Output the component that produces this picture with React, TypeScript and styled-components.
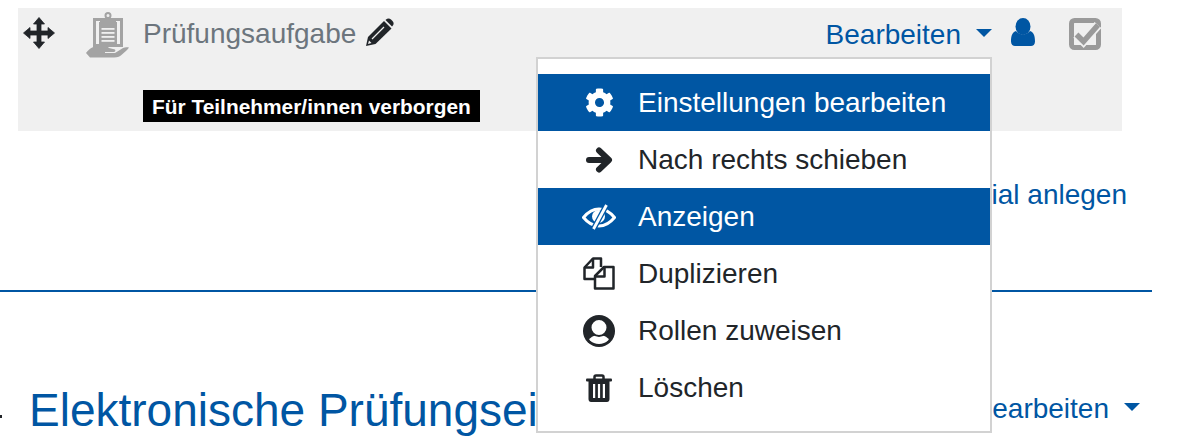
import React from "react";
import styled, { createGlobalStyle } from "styled-components";
import { FaCog } from "react-icons/fa";

const Global = createGlobalStyle`
  html, body { margin: 0; padding: 0; background: #fff; }
  body { font-family: "Liberation Sans", Arial, sans-serif; color: #212529; }
`;

const Page = styled.div`
  width: 1182px;
  height: 444px;
  overflow: hidden;
  padding-top: 8px;
  box-sizing: border-box;
`;

const Bar = styled.div`
  position: relative;
  width: 1104px;
  height: 123px;
  margin-left: 18px;
  background: #f0f0f0;
`;

const TopRow = styled.div`
  display: flex;
  align-items: flex-start;
  height: 60px;
`;

const MoveHandle = styled.svg`
  width: 32px;
  height: 32px;
  margin: 9px 0 0 5px;
  flex: none;
`;

const ActivityIcon = styled.svg`
  width: 44px;
  height: 50px;
  margin: 4px 0 0 30px;
  flex: none;
`;

const Title = styled.span`
  margin: 10px 0 0 14px;
  font-size: 28px;
  line-height: 32px;
  color: #6c757d;
`;

const Pencil = styled.svg`
  width: 28px;
  height: 28px;
  margin: 10px 0 0 10px;
  flex: none;
`;

const Actions = styled.div`
  display: flex;
  align-items: flex-start;
  margin-left: auto;
  padding-right: 20px;
`;

const EditLabel = styled.span`
  font-size: 28px;
  line-height: 32px;
  color: #0056a3;
`;

const EditToggle = styled.div`
  display: flex;
  align-items: flex-start;
`;

const TopEdit = styled(EditToggle)`
  margin-top: 11px;
`;

const Caret = styled.i`
  flex: none;
  width: 0;
  height: 0;
  margin: 10px 0 0 15px;
  border-left: 8px solid transparent;
  border-right: 8px solid transparent;
  border-top: 8px solid #0056a3;
`;

const UserMark = styled.svg`
  width: 24px;
  height: 28px;
  margin: 10px 0 0 19px;
  flex: none;
`;

const CheckBox = styled.svg`
  width: 34px;
  height: 34px;
  margin: 9px 0 0 33px;
  flex: none;
`;

const HiddenBadge = styled.span`
  display: inline-block;
  margin: 22px 0 0 125px;
  padding: 0 9px;
  height: 32px;
  line-height: 34px;
  background: #000;
  color: #fff;
  font-weight: 700;
  font-size: 20.9px;
`;

const Menu = styled.div`
  position: absolute;
  z-index: 5;
  left: 518px;
  top: 49px;
  width: 456px;
  height: 376px;
  box-sizing: border-box;
  padding-top: 15px;
  background: #fff;
  border: 2px solid #d2d2d2;
`;

const MenuRow = styled.div<{ $active?: boolean }>`
  display: flex;
  align-items: center;
  height: 57px;
  background: ${(p) => (p.$active ? "#0056a3" : "transparent")};
  color: ${(p) => (p.$active ? "#fff" : "#212529")};
  font-size: 28px;
`;

const MenuIcon = styled.span`
  flex: none;
  display: flex;
  justify-content: center;
  width: 34px;
  margin: 0 22px 0 44px;
  font-size: 29px;
`;

const LinkRow = styled.div`
  width: 1127px;
  margin-top: 48px;
  text-align: right;
  font-size: 28px;
  line-height: 32px;
  color: #0056a3;
`;

const Rule = styled.hr`
  width: 1152px;
  height: 2px;
  margin: 79px 0 0;
  border: 0;
  background: #0056a3;
`;

const SectionRow = styled.div`
  display: flex;
  align-items: flex-start;
  width: 1140px;
  margin-top: 91px;
  position: relative;
`;

const SectionTitle = styled.h3`
  width: 507px;
  overflow: hidden;
  margin: 0 0 0 29px;
  font-size: 46px;
  line-height: 54px;
  font-weight: 400;
  color: #0056a3;
  white-space: nowrap;
`;

const SectionEdit = styled(EditToggle)`
  margin: 10px 0 0 auto;
`;

const Dot = styled.i`
  position: absolute;
  left: 0;
  top: 32px;
  width: 2px;
  height: 3px;
  background: #212529;
`;

export default function App() {
  return (
    <Page>
      <Global />
      <Bar>
        <TopRow>
          <MoveHandle viewBox="0 0 32 32">
            <path
              d="M16 .5l5.500 6.500H18v7h7v-3.500l6.500 5.500-6.500 5.500V18h-7v7h3.500L16 31.500 10.500 25H14v-7H7v3.500L.5 16 7 10.500V14h7V7h-3.500z"
              fill="#212529"
              stroke="#212529"
              strokeWidth="0.8"
              strokeLinejoin="round"
            />
          </MoveHandle>
          <ActivityIcon viewBox="0 0 44 50">
            <rect x="9.500" y="7.500" width="27" height="26" fill="none" stroke="#a3a3a3" strokeWidth="3" />
            <rect x="14" y="10" width="18" height="24" fill="#a3a3a3" />
            <rect x="15" y="6" width="16" height="7" fill="#a3a3a3" />
            <circle cx="23" cy="3.500" r="2.500" fill="none" stroke="#a3a3a3" strokeWidth="2" />
            <g fill="#f0f0f0">
              <rect x="16.500" y="16" width="13" height="1.800" />
              <rect x="16.500" y="20" width="13" height="1.800" />
              <rect x="16.500" y="24" width="13" height="1.800" />
              <rect x="16.500" y="28" width="13" height="1.800" />
            </g>
            <path
              d="M1 41c3-4 7-7 12-7h7c2 0 3 1 4 2l4 1c2 0 3 1 2 2.500l-1 .5h-9v1h10l8-5c2-1 4-1 6-.5-1 2-4 4-7 7-2 2-4 3-8 3H5z"
              fill="#a3a3a3"
            />
          </ActivityIcon>
          <Title>Prüfungsaufgabe</Title>
          <Pencil viewBox="0 0 28 28">
            <path d="M0 28l2-9L18 3l7.500 7.500L9.500 26z" fill="#212529" />
            <path d="M20 1.500c1.500-1.500 3.500-1.500 5 0l1.500 1.500c1.500 1.500 1.500 3.500 0 5l-.5.5L19.500 2z" fill="#212529" />
            <path d="M6 21L18 9" stroke="#f0f0f0" strokeWidth="1.200" />
            <path d="M2 26l1-3.500 2.500 2.500z" fill="#f0f0f0" />
          </Pencil>
          <Actions>
            <TopEdit>
              <EditLabel>Bearbeiten</EditLabel>
              <Caret />
            </TopEdit>
            <UserMark viewBox="0 0 24 28">
              <ellipse cx="12" cy="8.500" rx="7.500" ry="8.500" fill="#0056a3" />
              <path
                d="M0 23.500c0-6 1.500-9.500 5-10.500 2 2 4.500 3.500 7 3.500s5-1.500 7-3.500c3.500 1 5 4.500 5 10.500 0 3-2 4.500-4 4.500H4c-2 0-4-1.500-4-4.500z"
                fill="#0056a3"
              />
            </UserMark>
            <CheckBox viewBox="0 0 34 34">
              <rect x="3.500" y="3.500" width="27" height="27" rx="3" fill="none" stroke="#9a9a9a" strokeWidth="5" />
              <path d="M8.500 17.500l7 7L30 8" fill="none" stroke="#f0f0f0" strokeWidth="9" />
              <path d="M8.500 17.500l7 7L30 8" fill="none" stroke="#9a9a9a" strokeWidth="5.500" />
            </CheckBox>
          </Actions>
        </TopRow>
        <HiddenBadge>Für Teilnehmer/innen verborgen</HiddenBadge>
        <Menu>
          <MenuRow $active>
            <MenuIcon><FaCog /></MenuIcon>
            Einstellungen bearbeiten
          </MenuRow>
          <MenuRow>
            <MenuIcon>
              <svg width="28" height="28" viewBox="0 0 28 28" fill="none" stroke="#212529" strokeWidth="6" strokeLinecap="round" strokeLinejoin="round">
                <path d="M4 14h18" />
                <path d="M14 4.500l10 9.500-10 9.500" />
              </svg>
            </MenuIcon>
            Nach rechts schieben
          </MenuRow>
          <MenuRow $active>
            <MenuIcon>
              <svg width="34" height="26" viewBox="0 0 34 26" fill="none" stroke="#fff">
                <path d="M1.500 13.500C6 8 11 5 17 5s11 3 15.500 8.500c-4.500 5.500-9.500 8.500-15.500 8.500s-11-3-15.500-8.500z" strokeWidth="3" />
                <circle cx="16.500" cy="12.500" r="6.500" fill="#fff" stroke="none" />
                <path d="M25 0L11 26" stroke="#0056a3" strokeWidth="5.500" />
                <path d="M24.500 1L11.500 25" strokeWidth="2.800" />
              </svg>
            </MenuIcon>
            Anzeigen
          </MenuRow>
          <MenuRow>
            <MenuIcon>
              <svg width="32" height="33" viewBox="0 0 32 33" fill="none" stroke="#212529" strokeWidth="2.500" strokeLinejoin="round">
                <path d="M12 22H1.500V10.500l8.500-9h8V10" />
                <path d="M10 1.500v9H1.500" />
                <path d="M12 19l9-9h9.500v21.500H12z" />
                <path d="M21.500 10v9.500H12" />
              </svg>
            </MenuIcon>
            Duplizieren
          </MenuRow>
          <MenuRow>
            <MenuIcon>
              <svg width="32" height="32" viewBox="0 0 32 32">
                <defs>
                  <clipPath id="user-face">
                    <circle cx="16" cy="16" r="13" />
                  </clipPath>
                </defs>
                <circle cx="16" cy="16" r="16" fill="#212529" />
                <g clipPath="url(#user-face)">
                  <ellipse cx="16" cy="31" rx="12.500" ry="11" fill="#fff" />
                </g>
                <circle cx="16" cy="12.500" r="8.500" fill="#fff" stroke="#212529" strokeWidth="2" />
              </svg>
            </MenuIcon>
            Rollen zuweisen
          </MenuRow>
          <MenuRow>
            <MenuIcon>
              <svg width="26" height="28" viewBox="0 0 26 28">
                <path d="M8.500 5V3c0-1 .5-1.500 1.500-1.500h6c1 0 1.500.5 1.500 1.500v2" fill="none" stroke="#212529" strokeWidth="2.500" />
                <rect x="0" y="4.500" width="26" height="3" rx="1" fill="#212529" />
                <path d="M2.500 7h21v18c0 2-1 3-2.500 3H5c-1.500 0-2.500-1-2.500-3z" fill="#212529" />
                <g fill="#fff">
                  <rect x="7" y="10" width="2.200" height="14" />
                  <rect x="11.900" y="10" width="2.200" height="14" />
                  <rect x="16.800" y="10" width="2.200" height="14" />
                </g>
              </svg>
            </MenuIcon>
            Löschen
          </MenuRow>
        </Menu>
      </Bar>
      <LinkRow>Arbeitsmaterial anlegen</LinkRow>
      <Rule />
      <SectionRow>
        <Dot />
        <SectionTitle>Elektronische Prüfungseinsicht</SectionTitle>
        <SectionEdit>
          <EditLabel>Bearbeiten</EditLabel>
          <Caret />
        </SectionEdit>
      </SectionRow>
    </Page>
  );
}
